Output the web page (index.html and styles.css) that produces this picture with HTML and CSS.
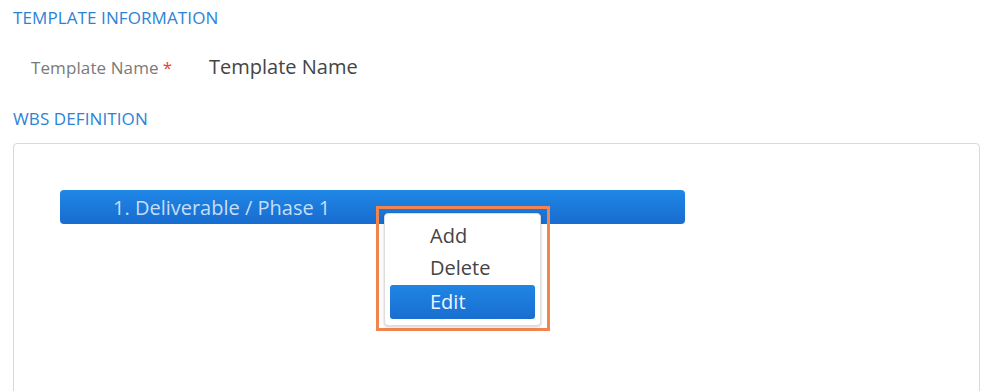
FILE: index.html
```html
<!DOCTYPE html>
<html lang="en">

<head>
  <meta charset="UTF-8" />
  <title>WBS Template</title>
  <link rel="stylesheet" href="styles.css">
</head>

<body>
  <div class="page">
    <h2 class="section-title">TEMPLATE INFORMATION</h2>
    <div class="field">
      <label class="field-label">Template Name<span class="required">*</span></label>
      <span class="field-value">Template Name</span>
    </div>

    <h2 class="section-title wbs-title">WBS DEFINITION</h2>
    <div class="wbs-box">
      <div class="wbs-node">
        <span class="node-text">1. Deliverable / Phase 1</span>

        <div class="menu-highlight">
          <ul class="context-menu">
            <li>Add</li>
            <li>Delete</li>
            <li class="active">Edit</li>
          </ul>
        </div>
      </div>
    </div>
  </div>
</body>

</html>
```

FILE: styles.css
```css
:root {
  --blue: #2b83d6;
  --node-top: #1f87e6;
  --node-bottom: #186ccf;
  --text: #444;
  --muted: #7a7a7a;
  --border: #d9d9d9;
  --orange: #f2854d;
}

* {
  margin: 0;
  padding: 0;
  box-sizing: border-box;
}

html,
body {
  height: 100%;
  overflow: hidden;
}

body {
  font-family: 'Open Sans', 'Noto Sans', sans-serif;
  background: #fff;
  color: var(--text);
}

.page {
  padding: 6px 10px 0 13px;
}

.section-title {
  font-size: 17px;
  font-weight: 400;
  color: var(--blue);
  line-height: 24px;
  letter-spacing: 0.1px;
}

.field {
  display: flex;
  align-items: baseline;
  margin-top: 23px;
  padding-left: 18px;
  line-height: 28px;
}

.field-label {
  font-size: 17px;
  color: var(--muted);
  width: 178px;
  letter-spacing: 0.1px;
}

.required {
  color: #e8403a;
  margin-left: 4px;
}

.field-value {
  font-size: 20px;
  color: var(--text);
}

.wbs-title {
  margin-top: 25px;
}

.wbs-box {
  margin-top: 12px;
  height: 300px;
  border: 1px solid var(--border);
  border-radius: 4px;
  padding: 46px 0 0 46px;
}

.wbs-node {
  position: relative;
  width: 625px;
  height: 34px;
  border-radius: 4px;
  background: linear-gradient(to bottom, var(--node-top), var(--node-bottom));
  padding-left: 53px;
  display: flex;
  align-items: center;
}

.node-text {
  font-size: 20px;
  color: #c6def7;
}

.menu-highlight {
  position: absolute;
  left: 316px;
  top: 16px;
  width: 174px;
  height: 125px;
  border: 3px solid var(--orange);
  padding: 4px 0 0 5px;
}

.context-menu {
  list-style: none;
  width: 157px;
  height: 113px;
  background: #fff;
  border: 1px solid #ddd;
  border-radius: 4px;
  box-shadow: 0 1px 3px rgba(0, 0, 0, 0.2);
  padding: 6px 5px;
}

.context-menu li {
  font-size: 20px;
  line-height: 32px;
  padding-left: 40px;
  color: var(--text);
  border-radius: 3px;
  height: 32px;
}

.context-menu li.active {
  margin-top: 1px;
  background: linear-gradient(to bottom, #1f85e4, #196ed0);
  color: #eef5fd;
  height: 34px;
  line-height: 34px;
}
```
